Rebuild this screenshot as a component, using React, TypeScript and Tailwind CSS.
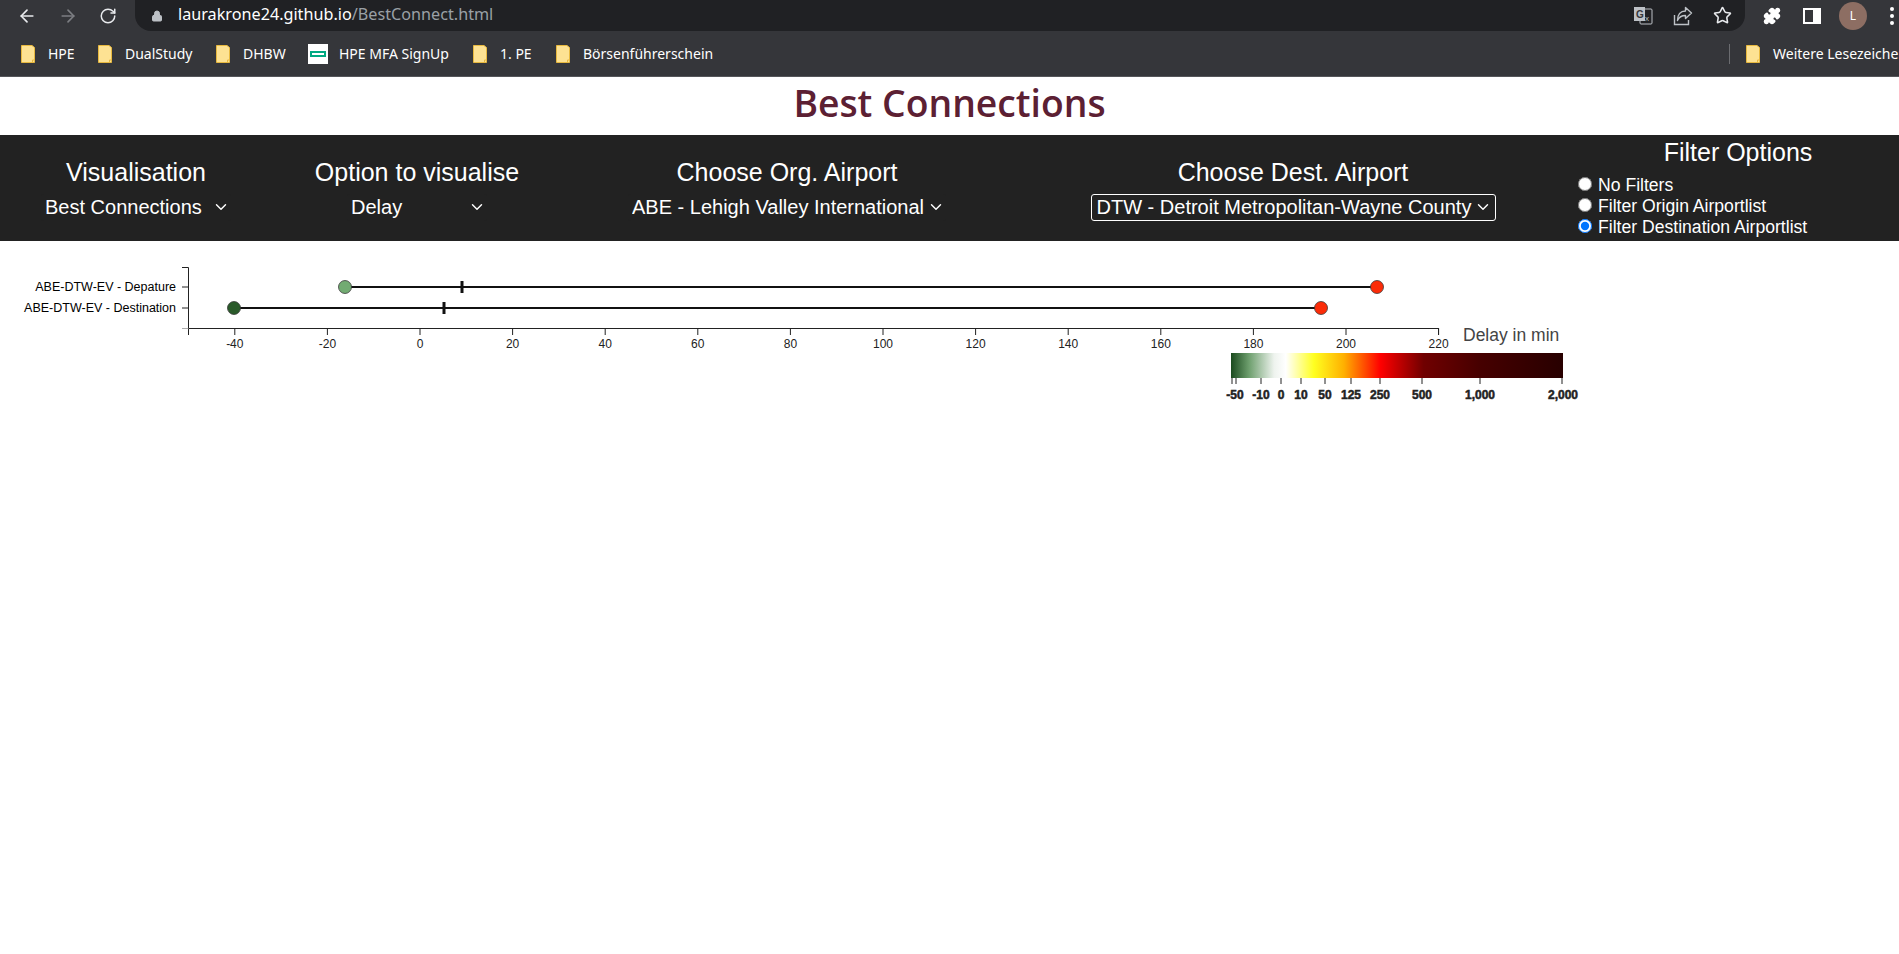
import React from "react";
import { ArrowLeft, ArrowRight, ChevronDown, RotateCw, Lock, Star, Puzzle } from "lucide-react";

const xScale = (v: number) => 420 + v * 4.63;
const axisTicks = [-40, -20, 0, 20, 40, 60, 80, 100, 120, 140, 160, 180, 200, 220];

const legendTicks = [
  { x: 1232, tx: 1235, label: "-50" },
  { x: 1236, tx: 0, label: "" },
  { x: 1261, tx: 1261, label: "-10" },
  { x: 1281, tx: 1281, label: "0" },
  { x: 1301, tx: 1301, label: "10" },
  { x: 1325, tx: 1325, label: "50" },
  { x: 1351, tx: 1351, label: "125" },
  { x: 1380, tx: 1380, label: "250" },
  { x: 1422, tx: 1422, label: "500" },
  { x: 1480, tx: 1480, label: "1,000" },
  { x: 1562, tx: 1563, label: "2,000" },
];

const bars = [
  { y: 46, label: "ABE-DTW-EV - Depature", min: 345, mid: 462, max: 1377, minColor: "#72ab72" },
  { y: 67, label: "ABE-DTW-EV - Destination", min: 234, mid: 444, max: 1321, minColor: "#2a5a2a" },
];

const Folder = () => (
  <svg width="16" height="20" viewBox="0 0 16 20" className="shrink-0">
    <path d="M1.5 1.5h10.5l2.5 2v15h-13z" fill="#fde293" stroke="#e8b93f" strokeWidth="1" />
    <path d="M12.5 18.5v-2.5h2" fill="none" stroke="#e8b93f" strokeWidth="1" />
  </svg>
);

const Bookmark = ({ label, className }: { label: string; className: string }) => (
  <div className={"flex shrink-0 items-center gap-[12px] " + className}>
    <Folder />
    <span className="text-[14px] text-white whitespace-nowrap">{label}</span>
  </div>
);

const TranslateIcon = () => (
  <svg width="20" height="20" viewBox="0 0 20 20">
    <rect x="7" y="3" width="12" height="15" rx="1" fill="none" stroke="#bdc1c6" strokeWidth="1" />
    <path d="M1 1h11v14H1z" fill="#bdc1c6" />
    <text x="3" y="12" fontSize="10" fontWeight="700" fill="#35363a" fontFamily="Liberation Sans, sans-serif">G</text>
    <text x="12" y="15" fontSize="8" fill="#bdc1c6" fontFamily="Liberation Sans, sans-serif">x</text>
  </svg>
);

const ShareIcon = () => (
  <svg width="20" height="20" viewBox="0 0 20 20" fill="none" stroke="#bdc1c6" strokeWidth="1.4">
    <path d="M1.5 9v9.5h14V14" />
    <path d="M12.5 1.5l6 5.5-6 5.5V9.5c-4 0-6.5 1.5-8 5 0-6 3-9.5 8-9.5z" strokeLinejoin="round" />
  </svg>
);

const Chart = () => (
  <svg width="1600" height="170" className="block" fontFamily="'Liberation Sans', Arial, sans-serif">
    <defs>
      <linearGradient id="legend" x1="0" x2="1" y1="0" y2="0">
        <stop offset="0" stopColor="#1a4a1e" />
        <stop offset="0.055" stopColor="#6fa06f" />
        <stop offset="0.13" stopColor="#eef3ee" />
        <stop offset="0.165" stopColor="#ffffff" />
        <stop offset="0.25" stopColor="#ffff20" />
        <stop offset="0.34" stopColor="#ffb000" />
        <stop offset="0.45" stopColor="#ff0000" />
        <stop offset="0.58" stopColor="#700000" />
        <stop offset="0.75" stopColor="#460000" />
        <stop offset="1" stopColor="#280000" />
      </linearGradient>
    </defs>

    {/* y axis */}
    <path d="M182 26.5H188.5V87" fill="none" stroke="#222" strokeWidth="1" />
    {bars.map((b) => (
      <g key={b.label}>
        <line x1="182" x2="188" y1={b.y} y2={b.y} stroke="#222" />
        <text x="176" y={b.y + 4} textAnchor="end" fontSize="12.5" fill="#000">
          {b.label}
        </text>
      </g>
    ))}

    {/* x axis */}
    <path d="M188.5 94V87.5H1438.5V94" fill="none" stroke="#222" strokeWidth="1" />
    <line x1="182" x2="188" y1="87.5" y2="87.5" stroke="#aaa" />
    {axisTicks.map((t) => (
      <g key={t}>
        <line x1={xScale(t)} x2={xScale(t)} y1="87" y2="94" stroke="#222" />
        <text x={xScale(t)} y="107" textAnchor="middle" fontSize="12" fill="#222">
          {t}
        </text>
      </g>
    ))}

    {/* bars */}
    {bars.map((b) => (
      <g key={b.label}>
        <line x1={b.min} x2={b.max} y1={b.y} y2={b.y} stroke="#111" strokeWidth="2" />
        <line x1={b.mid} x2={b.mid} y1={b.y - 6} y2={b.y + 6} stroke="#111" strokeWidth="3" />
        <circle cx={b.min} cy={b.y} r="6.5" fill={b.minColor} stroke="#333" strokeWidth="0.75" />
        <circle cx={b.max} cy={b.y} r="6.5" fill="#fb2c08" stroke="#333" strokeWidth="0.75" />
      </g>
    ))}

    <text x="1463" y="100" fontSize="17.5" fill="#444">
      Delay in min
    </text>

    {/* legend */}
    <rect x="1231" y="112" width="332" height="25" fill="url(#legend)" />
    {legendTicks.map((t) => (
      <g key={t.x}>
        <line x1={t.x} x2={t.x} y1="137" y2="143" stroke="#222" />
        {t.label && (
          <text x={t.tx} y="158" textAnchor="middle" fontSize="12" fontWeight="700" fill="#222" stroke="#222" strokeWidth="0.5">
            {t.label}
          </text>
        )}
      </g>
    ))}
  </svg>
);

const Picker = ({ title, value, colWidth, width, focused }: { title: string; value: string; colWidth: string; width: string; focused?: boolean }) => (
  <div className={"flex flex-col items-center pt-[23px] " + colWidth}>
    <label className="text-[25px] leading-[28px]">{title}</label>
    <div className={"relative mt-[8px] h-[27px] " + width}>
      <select
        defaultValue={value}
        className={
          focused
            ? "w-full h-full appearance-none text-[20px] leading-[23px] pl-[5px] border border-white rounded-[3px] bg-[#222222]"
            : "w-full h-full appearance-none text-[20px] leading-[23px] pl-[3px] border border-transparent rounded-[3px] bg-[#222222]"
        }
      >
        <option value={value}>{value}</option>
      </select>
      <ChevronDown
        size={18}
        strokeWidth={1.9}
        color="#fff"
        className={focused ? "absolute right-[4px] top-[4px] pointer-events-none" : "absolute right-px top-[4px] pointer-events-none"}
      />
    </div>
  </div>
);

export default function App() {
  return (
    <div className="min-h-[954px] bg-white font-['Liberation_Sans',Arial,sans-serif]">
      {/* browser chrome */}
      <div className="h-[77px] bg-[#35363a] border-b border-[#55565a] font-['Noto_Sans',sans-serif] overflow-hidden">
        <div className="h-[31px] flex items-center">
          <div className="w-[135px] pl-[17px] flex items-center gap-[21px]">
            <ArrowLeft size={20} color="#e8eaed" />
            <ArrowRight size={20} color="#7c7e82" />
            <RotateCw size={18} color="#e8eaed" />
          </div>
          <div className="w-[1610px] h-[31px] bg-[#202124] rounded-br-[16px] rounded-bl-[16px] flex items-center pl-[16px]">
            <Lock size={12} color="#bdc1c6" fill="#bdc1c6" />
            <span className="ml-[15px] pb-[3px] text-[16.2px] text-white">laurakrone24.github.io</span>
            <span className="pb-[3px] text-[16.2px] text-[#9aa0a6]">/BestConnect.html</span>
            <div className="ml-auto flex items-center gap-[20px] pr-[13px]">
              <TranslateIcon />
              <ShareIcon />
              <Star size={19} color="#e8eaed" />
            </div>
          </div>
          <div className="flex-1 flex items-center pl-[18px]">
            <Puzzle size={18} color="#fff" fill="#fff" />
            <div className="ml-[22px] w-[18px] h-[16px] border-2 border-white flex justify-end">
              <div className="w-[6px] bg-white" />
            </div>
            <div className="ml-[18px] shrink-0 w-[28px] h-[28px] rounded-full bg-[#8d6e63] text-white text-[12px] flex items-center justify-center">
              L
            </div>
            <div className="ml-[23px] flex flex-col gap-[3px]">
              <div className="w-[4px] h-[4px] rounded-full bg-white" />
              <div className="w-[4px] h-[4px] rounded-full bg-white" />
              <div className="w-[4px] h-[4px] rounded-full bg-white" />
            </div>
          </div>
        </div>
        <div className="h-[45px] flex items-center pl-[20px]">
          <Bookmark label="HPE" className="w-[77px]" />
          <Bookmark label="DualStudy" className="w-[118px]" />
          <Bookmark label="DHBW" className="w-[93px]" />
          <div className="w-[164px] shrink-0 flex items-center gap-[11px]">
            <div className="w-[20px] h-[20px] bg-white flex items-center justify-center">
              <div className="w-[16px] h-[6px] border-2 border-[#01a982]" />
            </div>
            <span className="text-[14px] text-white whitespace-nowrap">HPE MFA SignUp</span>
          </div>
          <Bookmark label="1. PE" className="w-[83px]" />
          <Bookmark label="Börsenführerschein" className="w-[1174px]" />
          <div className="w-px h-[20px] shrink-0 bg-[#6b6c70] mr-[15px]" />
          <Bookmark label="Weitere Lesezeichen" className="" />
        </div>
      </div>

      {/* page title */}
      <h1 className="h-[58px] pb-[6px] flex items-center justify-center text-[37.3px] font-semibold text-[#5c2033] font-['Open_Sans',sans-serif]">
        Best Connections
      </h1>

      {/* controls */}
      <div className="h-[106px] bg-[#222222] text-white flex">
        <Picker title="Visualisation" value="Best Connections" colWidth="w-[272px]" width="w-[190px]" />
        <Picker title="Option to visualise" value="Delay" colWidth="w-[290px]" width="w-[140px]" />
        <Picker title="Choose Org. Airport" value="ABE - Lehigh Valley International" colWidth="w-[450px]" width="w-[318px]" />
        <Picker title="Choose Dest. Airport" value="DTW - Detroit Metropolitan-Wayne County" colWidth="w-[562px]" width="w-[405px]" focused />
        <div className="flex-1 pl-[4px]">
          <div className="w-[320px] text-center text-[25px] leading-[28px] pt-[3px]">Filter Options</div>
          <div className="flex flex-col text-[17.6px] leading-[21px] mt-[9px]">
            <label className="flex items-center gap-[6px]">
              <input type="radio" name="filter" className="w-[14px] h-[14px] m-0 mb-[3px]" />
              No Filters
            </label>
            <label className="flex items-center gap-[6px]">
              <input type="radio" name="filter" className="w-[14px] h-[14px] m-0 mb-[3px]" />
              Filter Origin Airportlist
            </label>
            <label className="flex items-center gap-[6px]">
              <input type="radio" name="filter" defaultChecked className="w-[14px] h-[14px] m-0 mb-[3px]" />
              Filter Destination Airportlist
            </label>
          </div>
        </div>
      </div>

      <Chart />
    </div>
  );
}
